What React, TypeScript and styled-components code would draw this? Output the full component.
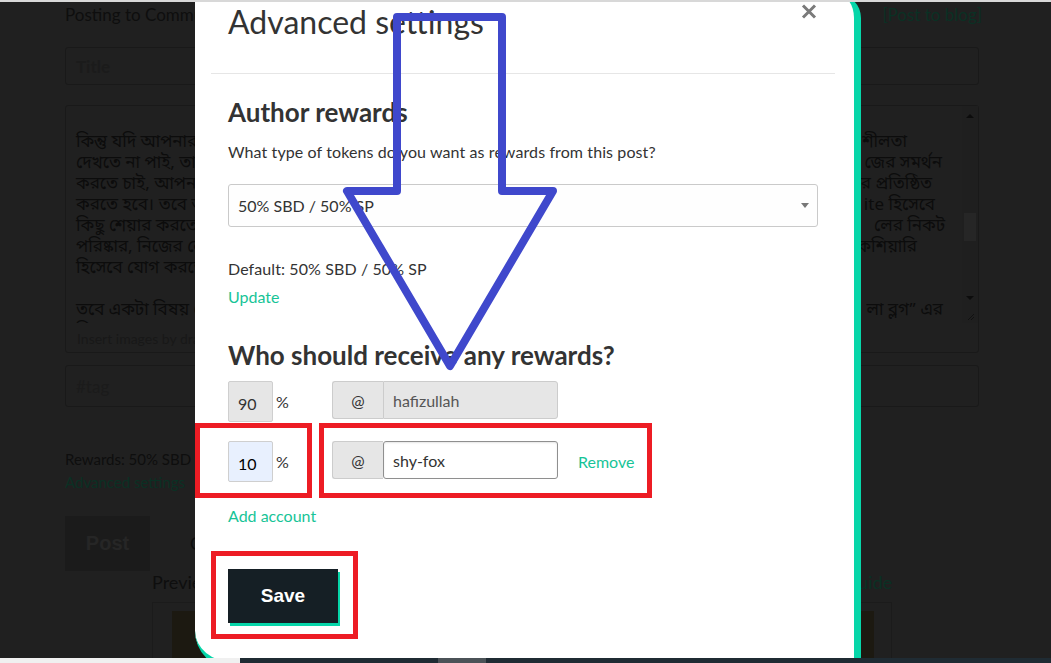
import React from "react";
import styled, { createGlobalStyle } from "styled-components";

const TEAL = "#06D6A9";
const LINK = "#17c497";
const DIM_TEXT = "#0e0e0e";
const DIM_LINK = "#0b3024";
const DIM_BORDER = "#191919";

const GlobalStyle = createGlobalStyle`
  html, body {
    margin: 0;
    padding: 0;
    height: 100%;
    overflow: hidden;
    background: #202020;
  }
  body {
    font-family: Lato, "Noto Sans", sans-serif;
  }
  * { box-sizing: border-box; }
`;

/* ---------- dimmed editor page behind the modal ---------- */

const Page = styled.div`
  width: 914px;
  margin-left: 65px;
  display: flex;
  flex-direction: column;
  color: ${DIM_TEXT};
  font-family: Lato, "Noto Sans", sans-serif;
`;

const TopRow = styled.div`
  margin-top: 3px;
  height: 24px;
  display: flex;
  justify-content: space-between;
  align-items: center;
  font-size: 17px;
  line-height: 24px;
`;

const DimLink = styled.a<{ $size?: number }>`
  color: ${DIM_LINK};
  text-decoration: none;
  font-size: ${(p) => p.$size ?? 17}px;
`;

const BlogLink = styled(DimLink)`
  margin-right: -3px;
`;

const DimInput = styled.div<{ $mt: number; $h: number }>`
  margin-top: ${(p) => p.$mt}px;
  height: ${(p) => p.$h}px;
  border: 1px solid ${DIM_BORDER};
  border-radius: 3px;
  padding-left: 10px;
  display: flex;
  align-items: center;
  font-size: 17px;
  color: #1b1b1b;
`;

const Editor = styled.div`
  margin-top: 20px;
  height: 248px;
  border: 1px solid ${DIM_BORDER};
  border-radius: 3px;
  display: flex;
  flex-direction: column;
`;

const EditArea = styled.div`
  height: 217px;
  display: flex;
`;

const EditText = styled.div`
  flex: 1;
  overflow: hidden;
  padding: 0 0 0 10px;
  font-family: "Noto Sans Bengali", "Lohit Bengali", "FreeSans", "Noto Sans", sans-serif;
  font-size: 17px;
  line-height: 21px;
  color: #0c0c0c;
`;

const EditLines = styled.div`
  margin-top: -16px;
`;

const EditLine = styled.div<{ $pr: number }>`
  height: 21px;
  display: flex;
  justify-content: space-between;
  padding-right: ${(p) => p.$pr}px;
  white-space: nowrap;
`;

const ScrollTrack = styled.div`
  width: 16px;
  display: flex;
  flex-direction: column;
  align-items: center;
  padding-top: 8px;
  background: #1f1f1f;
`;

const ScrollArrow = styled.div<{ $down?: boolean; $mt?: number }>`
  margin-top: ${(p) => p.$mt ?? 0}px;
  width: 0;
  height: 0;
  border-left: 4px solid transparent;
  border-right: 4px solid transparent;
  ${(p) =>
    p.$down
      ? `border-top: 4px solid #0c0c0c;`
      : `border-bottom: 4px solid #0c0c0c;`}
`;

const ScrollThumb = styled.div`
  margin-top: 95px;
  width: 12px;
  height: 28px;
  background: #262626;
`;

const Grip = styled.svg`
  margin-top: auto;
  margin-bottom: 2px;
`;

const EditFooter = styled.div`
  height: 31px;
  padding-left: 11px;
  font-size: 14px;
  line-height: 31px;
  color: #181818;
`;

const DimText = styled.div<{ $mt: number }>`
  margin-top: ${(p) => p.$mt}px;
  font-size: 15px;
  line-height: 22px;
  color: ${DIM_TEXT};
`;

const ButtonRow = styled.div`
  margin-top: 23px;
  display: flex;
  align-items: center;
`;

const PostButton = styled.div`
  width: 85px;
  height: 55px;
  background: #1b1b1b;
  color: #262626;
  font-family: "Liberation Sans", Arial, sans-serif;
  font-weight: 700;
  font-size: 20px;
  display: flex;
  align-items: center;
  justify-content: center;
`;

const ClearButton = styled.div`
  margin-left: 40px;
  font-size: 17px;
  color: ${DIM_TEXT};
`;

const PreviewSection = styled.div`
  width: 740px;
  align-self: center;
`;

const PreviewHeader = styled.div`
  display: flex;
  justify-content: space-between;
  font-size: 18px;
  line-height: 22px;
`;

const PreviewBox = styled.div`
  margin-top: 9px;
  height: 120px;
  border: 1px solid #1b1b1b;
  padding: 8px 17px 0 19px;
`;

const PreviewImage = styled.div`
  height: 110px;
  background: #1c1911;
`;

/* ---------- frame strips ---------- */

const TopLine = styled.div`
  position: fixed;
  top: 0;
  left: 0;
  right: 0;
  height: 2px;
  background: #d8d8d8;
  z-index: 10;
`;

const BottomStrip = styled.div`
  position: fixed;
  left: 0;
  right: 0;
  bottom: 0;
  height: 5px;
  display: flex;
  z-index: 10;
`;

const StripSeg = styled.div<{ $w?: number; $c: string }>`
  ${(p) => (p.$w ? `width: ${p.$w}px;` : `flex: 1;`)}
  background: ${(p) => p.$c};
`;

/* ---------- modal ---------- */

const Modal = styled.div`
  position: fixed;
  left: 195px;
  top: -6px;
  width: 666px;
  height: 675px;
  background: #fff;
  border-right: 7px solid ${TEAL};
  border-bottom: 7px solid ${TEAL};
  border-radius: 0 24px 0 38px;
  z-index: 5;
  font-family: Lato, "Noto Sans", sans-serif;
  color: #333;
`;

const CloseButton = styled.button`
  position: absolute;
  top: 10px;
  right: 37px;
  width: 16px;
  height: 15px;
  padding: 0;
  border: 0;
  background: none;
  display: flex;
`;

const Header = styled.div`
  height: 79px;
  padding: 8px 0 0 33px;
`;

const Title = styled.h2`
  margin: 0;
  font-size: 32px;
  line-height: 40px;
  font-weight: 400;
  color: #333;
`;

const Divider = styled.div`
  margin: 0 19px 0 16px;
  height: 1px;
  background: #e6e6e6;
`;

const Body = styled.div`
  padding-left: 33px;
  display: flex;
  flex-direction: column;
  align-items: flex-start;
`;

const SectionTitle = styled.h3<{ $mt: number }>`
  margin: ${(p) => p.$mt}px 0 0;
  font-size: 26px;
  line-height: 32px;
  font-weight: 700;
  color: #333;
`;

const Text = styled.p<{ $mt: number }>`
  margin: ${(p) => p.$mt}px 0 0;
  font-size: 16px;
  line-height: 24px;
  letter-spacing: 0.1px;
  color: #333;
`;

const TextLink = styled.a<{ $mt?: number }>`
  margin-top: ${(p) => p.$mt ?? 0}px;
  font-size: 16px;
  line-height: 24px;
  color: ${LINK};
  text-decoration: none;
  cursor: pointer;
`;

const SelectBox = styled.div`
  margin-top: 20px;
  width: 590px;
  height: 43px;
  border: 1px solid #cacaca;
  border-radius: 3px;
  background: #fefefe;
  display: flex;
  align-items: center;
  justify-content: space-between;
  padding: 0 8px 0 9px;
  font-size: 16px;
  color: #333;
`;

const Row = styled.div<{ $mt: number }>`
  margin-top: ${(p) => p.$mt}px;
  display: flex;
  align-items: flex-start;
`;

const PercentField = styled.div`
  width: 104px;
  display: flex;
  align-items: center;
`;

const PercentInput = styled.input<{ $autofill?: boolean }>`
  width: 45px;
  height: 41px;
  border: 1px solid #cfcfcf;
  border-radius: 2px;
  background: ${(p) => (p.$autofill ? "#e8f0fe" : "#e6e6e6")};
  padding: 3px 0 0 9px;
  font-family: Lato, "Noto Sans", sans-serif;
  font-size: 16px;
  color: ${(p) => (p.$autofill ? "#000" : "#333")};
  outline: none;
`;

const PercentSign = styled.span`
  margin-left: 3px;
  font-size: 16px;
  color: #333;
`;

const AccountGroup = styled.div`
  display: flex;
  height: 38px;
`;

const Addon = styled.span`
  width: 51px;
  height: 38px;
  background: #e6e6e6;
  border: 1px solid #cccccc;
  border-right: 0;
  border-radius: 3px 0 0 3px;
  display: flex;
  align-items: center;
  justify-content: center;
  font-size: 16px;
  color: #333;
`;

const AccountInput = styled.input<{ $editable?: boolean }>`
  width: 175px;
  height: 38px;
  border: 1px solid ${(p) => (p.$editable ? "#8f8f8f" : "#cccccc")};
  border-radius: ${(p) => (p.$editable ? "3px" : "0 3px 3px 0")};
  background: ${(p) => (p.$editable ? "#fff" : "#e6e6e6")};
  box-shadow: ${(p) => (p.$editable ? "inset 0 1px 2px rgba(0,0,0,0.1)" : "none")};
  padding: 0 0 0 9px;
  font-family: Lato, "Noto Sans", sans-serif;
  font-size: 16px;
  color: ${(p) => (p.$editable ? "#333" : "#555")};
  outline: none;
`;

const RemoveLink = styled(TextLink)`
  margin-left: 20px;
  align-self: center;
`;

const SaveButton = styled.button`
  margin-top: 41px;
  width: 110px;
  height: 54px;
  border: 0;
  background: #151f25;
  color: #fff;
  font-family: "Liberation Sans", Arial, sans-serif;
  font-weight: 700;
  font-size: 19px;
  box-shadow: 2px 3px 0 ${TEAL};
  cursor: pointer;
`;

/* ---------- annotations drawn on top ---------- */

const Annotations = styled.svg`
  position: fixed;
  left: 0;
  top: 0;
  z-index: 20;
  pointer-events: none;
`;

const lines: [string, string, number][] = [
  ["দেখবেন। আমার এই পোস্ট", "", 30],
  ["", "", 30],
  ["কিন্তু যদি আপনার পোস্টে", "শীলতা", 55],
  ["দেখতে না পাই, তাহলে", "জের সমর্থন", 20],
  ["করতে চাই, আপনাকে", "র প্রতিষ্ঠিত", 30],
  ["করতে হবে। তবে আপনি", "ite হিসেবে", 27],
  ["কিছু শেয়ার করতে চান", "লের নিকট", 17],
  ["পরিষ্কার, নিজের লেখা", "কশিয়ারি", 45],
  ["হিসেবে যোগ করতে হবে", "", 30],
  ["", "", 30],
  ["তবে একটা বিষয় খেয়াল", "লা ব্লগ” এর", 19],
  ["নিয়মগুলো শুধুমাত্র", "shy-fox", 40],
];

export default function App() {
  return (
    <>
      <GlobalStyle />
      <TopLine />

      <Page>
        <TopRow>
          <span>Posting to Community: আমার বাংলা ব্লগ</span>
          <BlogLink href="#">[Post to blog]</BlogLink>
        </TopRow>
        <DimInput $mt={20} $h={38}>
          <strong>Title</strong>
        </DimInput>
        <Editor>
          <EditArea>
            <EditText>
              <EditLines>
                {lines.map(([l, r, pr], i) => (
                  <EditLine key={i} $pr={pr}>
                    <span>{l || "\u00a0"}</span>
                    <span>{r}</span>
                  </EditLine>
                ))}
              </EditLines>
            </EditText>
            <ScrollTrack>
              <ScrollArrow />
              <ScrollThumb />
              <ScrollArrow $down $mt={55} />
              <Grip width="10" height="10" viewBox="0 0 10 10">
                <path d="M9 3 L3 9 M9 6 L6 9" stroke="#111" strokeWidth="1" />
              </Grip>
            </ScrollTrack>
          </EditArea>
          <EditFooter>
            Insert images by dragging &amp; dropping, pasting from the clipboard, or by selecting them.
          </EditFooter>
        </Editor>
        <DimInput $mt={12} $h={42}>
          #tag
        </DimInput>
        <DimText $mt={41}>Rewards: 50% SBD / 50% SP</DimText>
        <DimText $mt={1}>
          <DimLink href="#" $size={15}>
            Advanced settings
          </DimLink>
        </DimText>
        <ButtonRow>
          <PostButton>Post</PostButton>
          <ClearButton>Clear</ClearButton>
        </ButtonRow>
        <PreviewSection>
          <PreviewHeader>
            <span>Preview</span>
            <DimLink href="#" $size={18}>
              Markdown Styling Guide
            </DimLink>
          </PreviewHeader>
          <PreviewBox>
            <PreviewImage />
          </PreviewBox>
        </PreviewSection>
      </Page>

      <Modal>
        <CloseButton aria-label="Close">
          <svg width="16" height="15" viewBox="0 0 16 15">
            <path d="M2 1.5 L14 13.5 M14 1.5 L2 13.5" stroke="#7a7a7a" strokeWidth="3" strokeLinecap="butt" />
          </svg>
        </CloseButton>
        <Header>
          <Title>Advanced settings</Title>
        </Header>
        <Divider />
        <Body>
          <SectionTitle $mt={22}>Author rewards</SectionTitle>
          <Text $mt={12}>What type of tokens do you want as rewards from this post?</Text>
          <SelectBox>
            <span>50% SBD / 50% SP</span>
            <svg width="8" height="5" viewBox="0 0 8 5">
              <path d="M0 0 H8 L4 5 Z" fill="#777" />
            </svg>
          </SelectBox>
          <Text $mt={30}>Default: 50% SBD / 50% SP</Text>
          <TextLink $mt={4}>Update</TextLink>
          <SectionTitle $mt={30}>Who should receive any rewards?</SectionTitle>
          <Row $mt={10}>
            <PercentField>
              <PercentInput readOnly value="90" />
              <PercentSign>%</PercentSign>
            </PercentField>
            <AccountGroup>
              <Addon>@</Addon>
              <AccountInput readOnly value="hafizullah" />
            </AccountGroup>
          </Row>
          <Row $mt={19}>
            <PercentField>
              <PercentInput $autofill readOnly value="10" />
              <PercentSign>%</PercentSign>
            </PercentField>
            <AccountGroup>
              <Addon>@</Addon>
              <AccountInput $editable readOnly value="shy-fox" />
            </AccountGroup>
            <RemoveLink>Remove</RemoveLink>
          </Row>
          <TextLink $mt={22}>Add account</TextLink>
          <SaveButton>Save</SaveButton>
        </Body>
      </Modal>

      <Annotations width="1051" height="663" viewBox="0 0 1051 663">
        <path
          d="M397 17 L502 17 L502 191 L553 191 L450 366 L347 191 L397 191 Z"
          fill="none"
          stroke="#3F48CC"
          strokeWidth="8"
          strokeLinejoin="round"
        />
        <rect x="197.5" y="425.5" width="112" height="70" fill="none" stroke="#ED1C24" strokeWidth="5" />
        <rect x="321.5" y="425.5" width="328" height="70" fill="none" stroke="#ED1C24" strokeWidth="5" />
        <rect x="213.5" y="553.5" width="142" height="83" fill="none" stroke="#ED1C24" strokeWidth="5" />
      </Annotations>

      <BottomStrip>
        <StripSeg $w={240} $c="#f0f0f0" />
        <StripSeg $w={198} $c="#1f2b33" />
        <StripSeg $w={48} $c="#4b5257" />
        <StripSeg $c="#1f2b33" />
      </BottomStrip>
    </>
  );
}
